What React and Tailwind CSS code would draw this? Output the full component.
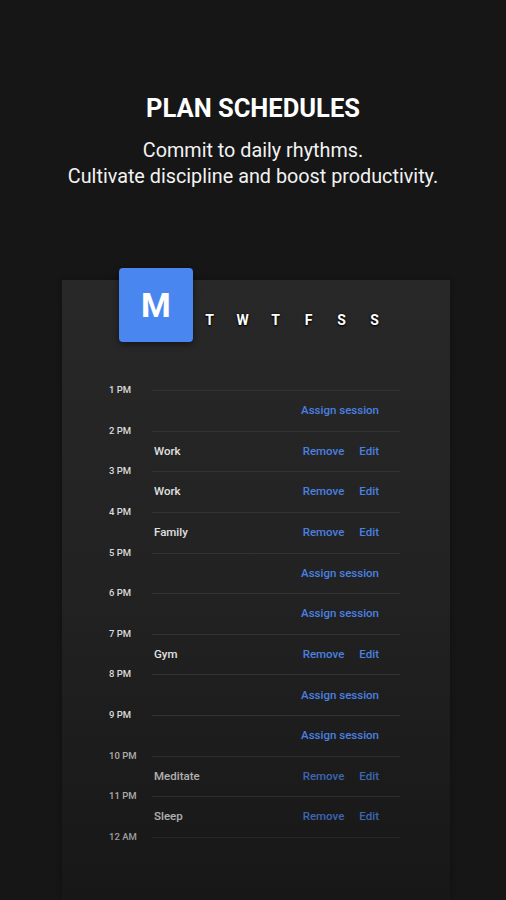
import React from "react";

const days = ["T", "W", "T", "F", "S", "S"];

const hours = [
    { time: "1 PM", label: null },
    { time: "2 PM", label: "Work" },
    { time: "3 PM", label: "Work" },
    { time: "4 PM", label: "Family" },
    { time: "5 PM", label: null },
    { time: "6 PM", label: null },
    { time: "7 PM", label: "Gym" },
    { time: "8 PM", label: null },
    { time: "9 PM", label: null },
    { time: "10 PM", label: "Meditate", dim: true },
    { time: "11 PM", label: "Sleep", dim: true },
];

const App = () => {
    return (
        <div className="h-[900px] w-full overflow-hidden bg-[#161616] font-['Roboto',sans-serif] text-white">
            {/* Header */}
            <div className="pt-[93px] text-center">
                <h1 className="text-[25.5px] font-bold leading-[30px]">PLAN SCHEDULES</h1>
                <p className="mt-[15px] text-[19.8px] leading-[26px] text-[#f2f2f2]">
                    Commit to daily rhythms.
                    <br />
                    Cultivate discipline and boost productivity.
                </p>
            </div>

            {/* Schedule panel */}
            <div className="ml-[62px] mt-[90px] flow-root h-[620px] w-[388px] bg-gradient-to-b from-[#282828] via-[#222222] to-[#171717] shadow-[0_0_6px_rgba(0,0,0,0.3)]">
                {/* Day selector */}
                <div className="-mt-[12px] flex items-start pl-[57px]">
                    <div className="flex h-[74px] w-[74px] items-center justify-center rounded-[4px] bg-[#4a86f0] shadow-[0_2px_6px_rgba(0,0,0,0.5)]">
                        <span className="text-[34px] font-bold leading-none">M</span>
                    </div>
                    <div className="mt-[44px] flex">
                        {days.map((d, i) => (
                            <span
                                key={i}
                                className="w-[33px] text-center text-[14px] font-bold leading-[16px] [text-shadow:0_0_2px_#000,0_1px_2px_#000]"
                            >
                                {d}
                            </span>
                        ))}
                    </div>
                </div>

                {/* Hour rows */}
                <div className="mt-[48px]">
                    {hours.map((h) => (
                        <div key={h.time} className={`flex h-[40.64px] ${h.dim ? "opacity-75" : ""}`}>
                            <div className="w-[90px] pl-[47px]">
                                <div className="-mt-[6px] text-[9.5px] font-medium leading-[12px] text-[#dcdcdc]">{h.time}</div>
                            </div>
                            <div className="flex w-[248px] items-center border-t border-[#333333] pl-[2px] pr-[21px]">
                                {h.label ? (
                                    <>
                                        <span className="text-[11.5px] font-medium text-[#e0e0e0]">{h.label}</span>
                                        <span className="ml-auto text-[11.5px] font-medium text-[#4a80e0]">Remove</span>
                                        <span className="ml-[15px] text-[11.5px] font-medium text-[#4a80e0]">Edit</span>
                                    </>
                                ) : (
                                    <span className="ml-auto text-[11.5px] font-medium text-[#4a80e0]">Assign session</span>
                                )}
                            </div>
                        </div>
                    ))}
                    <div className="flex opacity-70">
                        <div className="w-[90px] pl-[47px]">
                            <div className="-mt-[6px] text-[9.5px] font-medium leading-[12px] text-[#d4d4d4]">12 AM</div>
                        </div>
                        <div className="w-[248px] border-t border-[#2c2c2c]" />
                    </div>
                </div>
            </div>
        </div>
    );
};

export default App;
